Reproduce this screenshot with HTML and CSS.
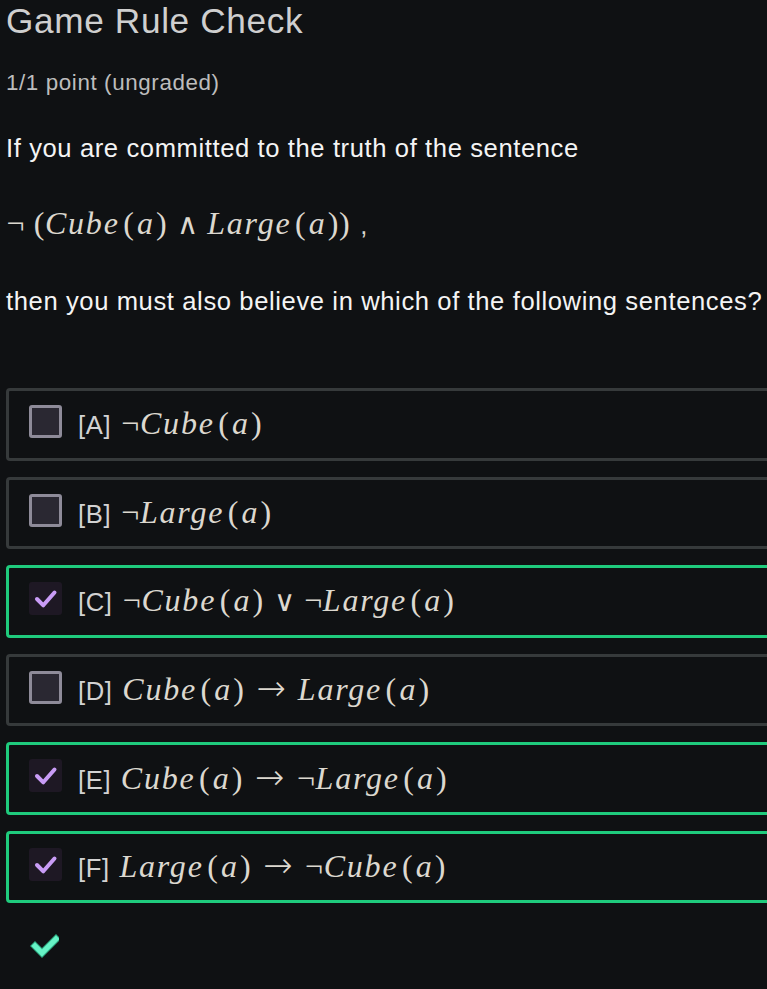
FILE: index.html
```html
<!DOCTYPE html>
<html lang="en">
<head>
<meta charset="utf-8">
<title>Game Rule Check</title>
<link rel="stylesheet" href="styles.css">
</head>
<body>
<main class="problem">
  <h1 class="title">Game Rule Check</h1>
  <div class="points">1/1 point (ungraded)</div>
  <p class="prompt">If you are committed to the truth of the sentence</p>
  <div class="display-math">
    <span class="math"><span class="mo neg-sp">¬</span><span class="mo">(</span><span class="mi">Cube</span><span class="mo fn">(</span><span class="mi arg">a</span><span class="mo">)</span><span class="sym bin">∧</span><span class="mi">Large</span><span class="mo fn">(</span><span class="mi arg">a</span><span class="mo">))</span></span><span class="comma">,</span>
  </div>
  <p class="prompt prompt-2">then you must also believe in which of the following sentences?</p>

  <div class="choices">
    <label class="choice">
      <span class="box"></span>
      <span class="text"><span class="tag">[A]</span> <span class="math"><span class="mo">¬</span><span class="mi">Cube</span><span class="mo fn">(</span><span class="mi arg">a</span><span class="mo">)</span></span></span>
    </label>
    <label class="choice">
      <span class="box"></span>
      <span class="text"><span class="tag">[B]</span> <span class="math"><span class="mo">¬</span><span class="mi">Large</span><span class="mo fn">(</span><span class="mi arg">a</span><span class="mo">)</span></span></span>
    </label>
    <label class="choice correct">
      <span class="box checked"><svg viewBox="0 0 33 33" width="33" height="33"><path d="M8 17 L14.3 23.3 L25.5 10.5" fill="none" stroke="#c99cf6" stroke-width="4" stroke-linecap="round" stroke-linejoin="round"/></svg></span>
      <span class="text"><span class="tag">[C]</span> <span class="math"><span class="mo">¬</span><span class="mi">Cube</span><span class="mo fn">(</span><span class="mi arg">a</span><span class="mo">)</span><span class="sym bin">∨</span><span class="mo">¬</span><span class="mi">Large</span><span class="mo fn">(</span><span class="mi arg">a</span><span class="mo">)</span></span></span>
    </label>
    <label class="choice">
      <span class="box"></span>
      <span class="text"><span class="tag">[D]</span> <span class="math"><span class="mi">Cube</span><span class="mo fn">(</span><span class="mi arg">a</span><span class="mo">)</span><span class="sym rel">→</span><span class="mi">Large</span><span class="mo fn">(</span><span class="mi arg">a</span><span class="mo">)</span></span></span>
    </label>
    <label class="choice correct">
      <span class="box checked"><svg viewBox="0 0 33 33" width="33" height="33"><path d="M8 17 L14.3 23.3 L25.5 10.5" fill="none" stroke="#c99cf6" stroke-width="4" stroke-linecap="round" stroke-linejoin="round"/></svg></span>
      <span class="text"><span class="tag">[E]</span> <span class="math"><span class="mi">Cube</span><span class="mo fn">(</span><span class="mi arg">a</span><span class="mo">)</span><span class="sym rel">→</span><span class="mo">¬</span><span class="mi">Large</span><span class="mo fn">(</span><span class="mi arg">a</span><span class="mo">)</span></span></span>
    </label>
    <label class="choice correct">
      <span class="box checked"><svg viewBox="0 0 33 33" width="33" height="33"><path d="M8 17 L14.3 23.3 L25.5 10.5" fill="none" stroke="#c99cf6" stroke-width="4" stroke-linecap="round" stroke-linejoin="round"/></svg></span>
      <span class="text"><span class="tag">[F]</span> <span class="math"><span class="mi">Large</span><span class="mo fn">(</span><span class="mi arg">a</span><span class="mo">)</span><span class="sym rel">→</span><span class="mo">¬</span><span class="mi">Cube</span><span class="mo fn">(</span><span class="mi arg">a</span><span class="mo">)</span></span></span>
    </label>
  </div>

  <div class="status">
    <svg viewBox="0 0 30 24" width="30" height="24"><path d="M6 12 L13 19 L27 5" fill="none" stroke="#2fae85" stroke-width="7" stroke-linecap="square" stroke-linejoin="miter"/><path d="M6 12 L13 19 L27 5" fill="none" stroke="#66f3c6" stroke-width="5" stroke-linecap="square" stroke-linejoin="miter"/></svg>
  </div>
</main>
</body>
</html>
```
FILE: styles.css
```css
html {
  overflow: hidden;
  background: #0f1113;
}
body {
  margin: 0;
  background: #0f1113;
  font-family: "Liberation Sans", Arial, sans-serif;
  color: #f2f2f2;
  letter-spacing: 0.6px;
}
.problem {
  padding: 0 0 0 6px;
  width: 800px;
}
.title {
  margin: 1px 0 0;
  font-size: 35.2px;
  font-weight: 400;
  line-height: 40px;
  letter-spacing: 0.65px;
  color: #cfcfcf;
}
.points {
  margin-top: 29px;
  font-size: 22.4px;
  line-height: 26px;
  color: #bdbdbd;
}
.prompt {
  margin: 38px 0 0;
  font-size: 25.6px;
  line-height: 29px;
  color: #f4f4f4;
}
.prompt-2 {
  margin-top: 44px;
}
.display-math {
  margin-top: 40px;
  height: 40px;
  line-height: 40px;
  font-size: 32px;
}
.math {
  font-family: "Liberation Serif", "Times New Roman", serif;
  font-size: 32px;
  color: #dcd8cf;
  white-space: nowrap;
  letter-spacing: 0;
}
.mi {
  font-style: italic;
  letter-spacing: 1.8px;
}
.mi.arg {
  letter-spacing: 0;
  padding: 0 2.5px 0 2.5px;
}
.mo {
  letter-spacing: 0.6px;
  padding-left: 0.5px;
}
.mo.fn {
  margin-left: 3px;
}
.mo.neg-sp {
  margin-right: 8px;
}
.sym {
  font-family: "DejaVu Sans ExtraLight", "DejaVu Sans Light", "DejaVu Sans", sans-serif;
  font-weight: 200;
  color: #dcd8cf;
}
.sym.bin {
  font-size: 29px;
  margin: 0 9px 0 10px;
}
.sym.rel {
  font-size: 35px;
  margin: 0 12px 0 12px;
}
.comma {
  font-family: "Liberation Sans", sans-serif;
  font-size: 25.6px;
  color: #dcd8cf;
  margin-left: 10px;
}
.choices {
  margin-top: 72px;
  display: flex;
  flex-direction: column;
  gap: 16px;
}
.choice {
  box-sizing: border-box;
  height: 72.5px;
  border: 3px solid #363a3b;
  border-radius: 4px;
  padding: 0 20px;
  display: flex;
  align-items: center;
  gap: 16px;
}
.choice.correct {
  border-color: #1fcb7d;
}
.box {
  flex: none;
  box-sizing: border-box;
  width: 33px;
  height: 33px;
  border: 3px solid #8e8b99;
  border-radius: 3px;
  background: #2a2832;
  margin-bottom: 5px;
}
.box.checked {
  border: none;
  background: #1e1824;
}
.box svg {
  display: block;
}
.text {
  font-size: 25.6px;
  line-height: 40px;
  white-space: nowrap;
}
.tag {
  color: #d2d2d2;
  margin-right: 2px;
}
.status {
  margin: 31px 0 0 23px;
  height: 30px;
}
.status svg {
  display: block;
}
```
